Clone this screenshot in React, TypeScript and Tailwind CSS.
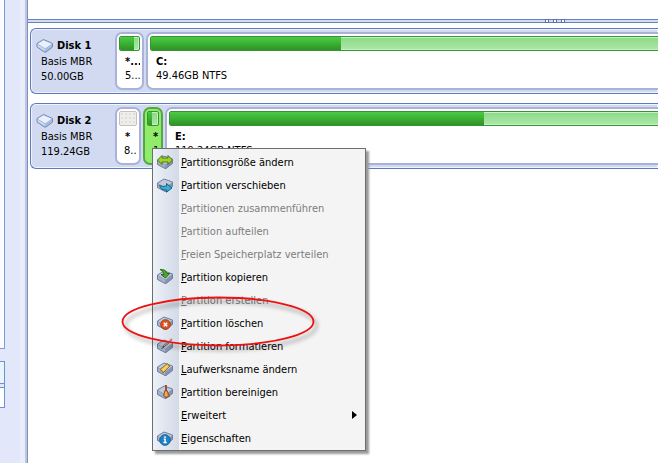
import React from "react";

type IconKind =
  | "resize"
  | "move"
  | "copy"
  | "delete"
  | "format"
  | "label"
  | "clean"
  | "info";

// grey drive body shared by every menu icon, with a coloured mark on top
const MenuIcon: React.FC<{ kind: IconKind }> = ({ kind }) => (
  <svg width="16" height="16" viewBox="0 0 16 16" aria-hidden="true">
    <path d="M0.5 6 7 2 15.5 5V9.5L9 14.5H8L0.5 10.5Z" fill="#8595b3" />
    <path d="M0.5 6 7 2 15.5 5 8.5 10.5Z" fill="#c0cadb" />
    <path d="M1 7 8 11V14L1 10.3Z" fill="#a5b2ca" />
    <path
      d="M0.5 6 7 2 15.5 5V9.5L9 14.5H8L0.5 10.5Z"
      fill="none"
      stroke="#697896"
      strokeWidth="0.9"
    />
    {kind === "resize" && (
      <path
        d="M0.5 6 5 1.5V4H11V1.5L15.5 6 11 10.5V8H5V10.5Z"
        fill="#a3d322"
        stroke="#416f14"
        strokeWidth="0.9"
      />
    )}
    {kind === "move" && (
      <path
        d="M2.5 8.5Q5 10 9.5 9V6.5L15 11 9.5 15.2V13Q4 13.5 2.5 8.5Z"
        fill="#2fb3cf"
        stroke="#174f83"
        strokeWidth="0.9"
      />
    )}
    {kind === "copy" && (
      <path
        d="M3 0.5Q9 0 10 4.5H12.8L8.5 9 4 5.5H7Q6.5 2 3 0.5Z"
        fill="#4fa828"
        stroke="#226318"
        strokeWidth="0.9"
      />
    )}
    {kind === "delete" && (
      <>
        <circle cx="8.5" cy="9.5" r="4.8" fill="#dd5420" stroke="#a93a14" />
        <path
          d="M6.8 7.8 10.2 11.2M10.2 7.8 6.8 11.2"
          stroke="#fff"
          strokeWidth="1.5"
        />
      </>
    )}
    {kind === "format" && (
      <>
        <path d="M6 9 12 4" stroke="#574f49" strokeWidth="2" />
        <path d="M7 8 12 4" stroke="#d8c39d" />
        <path d="M12.5 3.5 15 1" stroke="#d4776b" strokeWidth="2" />
        <path d="M4.5 10.5 6.5 9.5" stroke="#333" />
      </>
    )}
    {kind === "label" && (
      <>
        <path
          d="M3 8.5 10.5 2.5 11.5 4.5 13 5 6 12 5 10Z"
          fill="#efc34c"
          stroke="#91661a"
          strokeWidth="0.9"
        />
        <path d="M6 9 10.5 5" stroke="#fae596" />
      </>
    )}
    {kind === "clean" && (
      <>
        <path d="M9 1V7" stroke="#a83c27" strokeWidth="1.8" />
        <path
          d="M8 6.5H10L12.5 12.5 9 13.5 6.5 11.5Z"
          fill="#dd8b3e"
          stroke="#874322"
          strokeWidth="0.9"
        />
        <path d="M9 8V12" stroke="#f7cf6e" />
      </>
    )}
    {kind === "info" && (
      <>
        <circle cx="8" cy="10" r="5.3" fill="#1e83c2" stroke="#17629a" />
        <path
          d="M8 6.3V7.9M6.8 9.2H8V12.6M6.5 12.6H9.7"
          stroke="#fff"
          strokeWidth="1.5"
        />
      </>
    )}
  </svg>
);

const DriveIcon = () => (
  <svg width="18" height="16" viewBox="0 0 18 16" aria-hidden="true">
    <path
      d="M1 5.5 7.5 1.5 16.5 5.5V9L10 14 8.5 14 1 9Z"
      fill="#a9bce0"
      stroke="#7189b5"
    />
    <path d="M1.7 5.7 7.5 2.2 15.7 5.8 9.3 10.3Z" fill="#eaf1fc" />
    <path d="M1.6 6.8 8.8 11.2V13.2L1.6 8.8Z" fill="#cddcf3" />
  </svg>
);

const Usage: React.FC<{ used: number }> = ({ used }) => (
  <div className="h-[15px] overflow-hidden rounded-[2px] border border-[#35962f] bg-linear-to-b from-[#8bd987] to-[#ace8a9] shadow-[inset_0_0_0_1px_#c9efc6]">
    <div
      className="h-full bg-linear-to-b from-[#4cca46] via-[#3ab133] to-[#329129]"
      style={{ width: `${used}px` }}
    />
  </div>
);

const card =
  "h-[58px] shrink-0 overflow-hidden whitespace-nowrap rounded-[7px] border-2 px-[2px] pt-[2px] leading-[14px]";
const plain = "border-[#aab3d7] bg-white";

const Disk: React.FC<{
  name: string;
  size: string;
  children: React.ReactNode;
}> = ({ name, size, children }) => (
  <section className="flex h-[66px] overflow-hidden rounded-l-[6px] border border-r-0 border-[#5b7bc0] bg-[#d1daf0] pt-[3px] shadow-[inset_0_0_0_1px_#f0f3fb]">
    <header className="w-[84px] shrink-0 pt-[5px]">
      <h2 className="flex items-center pl-[5px] font-bold leading-[16px]">
        <DriveIcon />
        <span className="ml-[3px] pt-px">{name}</span>
      </h2>
      <p className="pl-[10px]">Basis MBR</p>
      <p className="pl-[10px]">{size}</p>
    </header>
    {children}
  </section>
);

type Item = {
  hotkey: string;
  text: string;
  icon?: IconKind;
  disabled?: boolean;
  submenu?: boolean;
};

const items: Item[] = [
  { hotkey: "P", text: "artitionsgröße ändern", icon: "resize" },
  { hotkey: "P", text: "artition verschieben", icon: "move" },
  { hotkey: "P", text: "artitionen zusammenführen", disabled: true },
  { hotkey: "P", text: "artition aufteilen", disabled: true },
  { hotkey: "F", text: "reien Speicherplatz verteilen", disabled: true },
  { hotkey: "P", text: "artition kopieren", icon: "copy" },
  { hotkey: "P", text: "artition erstellen", disabled: true },
  { hotkey: "P", text: "artition löschen", icon: "delete" },
  { hotkey: "P", text: "artition formatieren", icon: "format" },
  { hotkey: "L", text: "aufwerksname ändern", icon: "label" },
  { hotkey: "P", text: "artition bereinigen", icon: "clean" },
  { hotkey: "E", text: "rweitert", submenu: true },
  { hotkey: "E", text: "igenschaften", icon: "info" },
];

const ContextMenu = () => (
  <div
    role="menu"
    className="absolute left-[152px] top-[148px] w-[214px] border border-[#6d6d6d] bg-[#f4f4f4] bg-linear-to-r from-[#edf1f8] to-[#d2dae6] bg-[length:26px_100%] bg-no-repeat py-px shadow-[3px_3px_2px_#9a9a9a]"
  >
    {items.map((item) => (
      <button
        key={item.hotkey + item.text}
        role="menuitem"
        disabled={item.disabled}
        className="flex h-[23px] w-full items-center whitespace-nowrap text-left disabled:text-[#7d7d7d]"
      >
        <span className="flex w-[28px] justify-start pl-[4px]">
          {item.icon && <MenuIcon kind={item.icon} />}
        </span>
        <span className="pt-[2px]">
          <u>{item.hotkey}</u>
          {item.text}
        </span>
        {item.submenu && (
          <svg
            className="ml-auto mr-[8px]"
            width="5"
            height="8"
            aria-hidden="true"
          >
            <path d="M0 0 5 4 0 8Z" />
          </svg>
        )}
      </button>
    ))}
    <svg
      className="pointer-events-none absolute -left-[34px] top-[144px] drop-shadow-[3px_4px_2px_#0006]"
      width="200"
      height="58"
      aria-hidden="true"
    >
      <ellipse
        cx="99"
        cy="28.5"
        rx="95.5"
        ry="24"
        fill="none"
        stroke="#ee1111"
        strokeWidth="1.8"
      />
    </svg>
  </div>
);

export default function App() {
  return (
    <div className="relative flex min-h-screen overflow-hidden bg-white font-['DejaVu_Sans_Condensed','DejaVu_Sans',sans-serif] text-[11px] leading-[15px] text-black">
      <aside className="flex w-[28px] shrink-0 justify-between border-r border-[#7f90bf] bg-[#e2e8fa]">
        <div className="w-[5px]">
          <div className="h-[349px] border-r border-b border-[#7b9bd4] bg-[#fbfcff]" />
          <div className="mt-[12px] h-[23px] border-y border-r border-[#6a94d0] bg-[#e9f6fd]" />
          <div className="h-[3px] border-r border-[#6a94d0]" />
          <div className="h-[21px] border-y border-r border-[#6a94d0] bg-white" />
        </div>
        <div className="w-[7px] border-r-2 border-[#bcc6e4] bg-[#e9edfb]" />
      </aside>
      <main className="min-w-0 flex-1">
        <div className="mt-[19px] flex h-[4px] items-center justify-end gap-[4px] border-y border-[#6682c0] bg-[#d3dcf1] pr-[93px]">
          <i className="size-[4px] border border-[#5a6fae] bg-white" />
          <i className="size-[4px] border border-[#5a6fae] bg-white" />
          <i className="size-[4px] border border-[#5a6fae] bg-white" />
        </div>
        <div className="mt-[5px] flex flex-col gap-[9px] pl-[2px]">
          <Disk name="Disk 1" size="50.00GB">
            <div className={`${card} ${plain} w-[29px]`}>
              <Usage used={14} />
              <p className="overflow-hidden pl-[6px] pt-[4px] font-bold">*...</p>
              <p className="overflow-hidden pl-[6px]">5...</p>
            </div>
            <div className={`${card} ${plain} -mr-[8px] ml-[2px] flex-1`}>
              <Usage used={190} />
              <p className="pl-[6px] pt-[4px] font-bold">C:</p>
              <p className="pl-[6px]">49.46GB NTFS</p>
            </div>
          </Disk>
          <Disk name="Disk 2" size="119.24GB">
            <div className={`${card} ${plain} w-[26px]`}>
              <div className="h-[15px] rounded-[2px] border border-[#c4c0bb] bg-[#f0eeeb] bg-[radial-gradient(#e2dfdb_1px,transparent_1px)] bg-[length:4px_4px]" />
              <p className="pl-[6px] pt-[4px] font-bold">*</p>
              <p className="pl-[5px]">8..</p>
            </div>
            <div
              className={`${card} ml-[2px] w-[20px] border-[#52a944] bg-[#91ec6c]`}
            >
              <Usage used={4} />
              <p className="pl-[6px] pt-[4px] font-bold">*</p>
              <p className="pl-[6px]">1</p>
            </div>
            <div className={`${card} ${plain} -mr-[8px] ml-[2px] flex-1`}>
              <Usage used={314} />
              <p className="pl-[6px] pt-[4px] font-bold">E:</p>
              <p className="pl-[6px]">119.24GB NTFS</p>
            </div>
          </Disk>
        </div>
      </main>
      <ContextMenu />
    </div>
  );
}
